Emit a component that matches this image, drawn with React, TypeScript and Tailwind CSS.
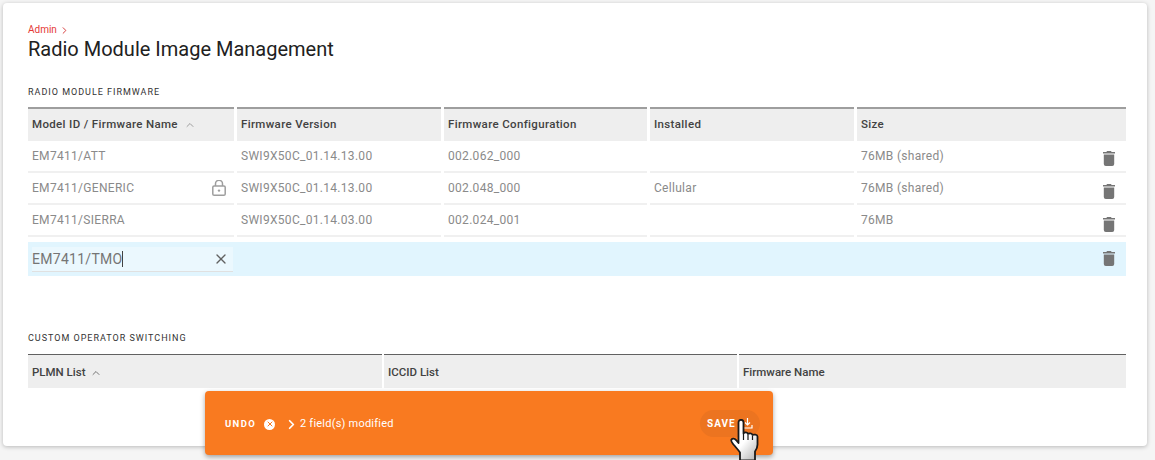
import { ChevronRight, ChevronUp, X } from "lucide-react";

const firmwareColumns = ["Firmware Version", "Firmware Configuration", "Installed", "Size"];

const firmwareRows = [
  { name: "EM7411/ATT", version: "SWI9X50C_01.14.13.00", config: "002.062_000", installed: "", size: "76MB (shared)", trash: "mt-[4px]" },
  { name: "EM7411/GENERIC", version: "SWI9X50C_01.14.13.00", config: "002.048_000", installed: "Cellular", size: "76MB (shared)", locked: true, trash: "mt-[6px]" },
  { name: "EM7411/SIERRA", version: "SWI9X50C_01.14.03.00", config: "002.024_001", installed: "", size: "76MB", trash: "mt-[8px]" },
];

const gridCols = "grid grid-cols-[206px_204px_203px_204px_1fr] gap-x-[3px]";

function TrashIcon({ className = "" }: { className?: string }) {
  return (
    <svg width="12" height="15" viewBox="0 0 12 15" className={`text-[#757575] ${className}`}>
      <path fill="currentColor" d="M4 0h4l.6 1H12v1.600H0V1h3.400zM.8 3.600h10.400V13a2 2 0 0 1-2 2H2.800a2 2 0 0 1-2-2z" />
    </svg>
  );
}

function LockIcon() {
  return (
    <svg width="14" height="16" viewBox="0 0 14 16" fill="none" stroke="#9e9e9e" strokeWidth="1.500">
      <path d="M3.500 6V3.800a3.500 3.500 0 0 1 7 0V6" />
      <rect x="0.800" y="6" width="12.400" height="9.200" rx="1.300" />
      <circle cx="7" cy="10.600" r="1.200" fill="#9e9e9e" stroke="none" />
    </svg>
  );
}

function HandCursor() {
  return (
    <svg width="32" height="42" viewBox="0 0 32 42" className="absolute left-[730px] top-[419px]">
      <defs>
        <linearGradient id="hand" x1="0.2" y1="0.2" x2="0.8" y2="1">
          <stop offset="0.45" stopColor="#ffffff" />
          <stop offset="1" stopColor="#bdbdbd" />
        </linearGradient>
      </defs>
      <path
        fill="url(#hand)"
        stroke="#1a1a1a"
        strokeWidth="1.800"
        strokeLinejoin="round"
        d="M8.500 3.500c0-3.500 5-3.500 5 0v11c1-1.500 4-1.500 4.500.5 1-1 4-1 4.500 1 1-.8 5-.5 5 1.500v8c0 3-1 5-2.500 7v9H10v-8c-2-3-4-5-6.500-8-1.500-2-3-3.500-2-5 1-1.500 3-1 4.500.5l2.500 3z"
      />
      <path stroke="#1a1a1a" strokeWidth="1.200" fill="none" d="M13.500 15v6M18 16v5M22.500 17v4" />
    </svg>
  );
}

export default function App() {
  return (
    <div className="relative h-[460px] w-[1155px] overflow-hidden bg-[#f5f5f5] pl-[3px] pr-2 pt-[3px] font-['Roboto',sans-serif]">
      <div className="h-[443px] rounded bg-white px-[25px] pt-[21px] shadow-[0_1px_4px_rgba(0,0,0,0.25)]">
        <div className="flex items-center gap-[2px] text-[10px] leading-3 text-[#e53935]">
          Admin <ChevronRight size={11} strokeWidth={2} className="text-[#d32f2f]" />
        </div>
        <h1 className="-mt-px text-xl leading-7 text-[#212121]">Radio Module Image Management</h1>

        <h2 className="mt-[23px] text-[9px] font-normal leading-3 tracking-[0.11em] text-[#333333]">RADIO MODULE FIRMWARE</h2>

        <div className="mt-[9px] w-[1098px] text-[12px]">
          <div className={`${gridCols} h-[34px] text-[11.500px] font-medium tracking-[0.03em] text-[#424242]`}>
            <div className="flex items-center gap-[6px] border-t-2 border-[#9e9e9e] bg-[#eeeeee] pl-1">
              Model ID / Firmware Name <ChevronUp size={12} className="text-[#9e9e9e]" />
            </div>
            {firmwareColumns.map((col) => (
              <div key={col} className="flex items-center border-t-2 border-[#9e9e9e] bg-[#eeeeee] pl-1">
                {col}
              </div>
            ))}
          </div>

          {firmwareRows.map((row) => (
            <div key={row.name} className={`${gridCols} h-[32px] tracking-[0.025em] text-[#8a8a8a]`}>
              <div className="flex items-center justify-between border-b-2 border-[#f0f0f0] pl-1 pr-2">
                {row.name}
                {row.locked && <LockIcon />}
              </div>
              <div className="flex items-center border-b-2 border-[#f0f0f0] pl-1">{row.version}</div>
              <div className="flex items-center border-b-2 border-[#f0f0f0] pl-1">{row.config}</div>
              <div className="flex items-center border-b-2 border-[#f0f0f0] pl-1">{row.installed}</div>
              <div className="flex items-center justify-between border-b-2 border-[#f0f0f0] pl-1 pr-[11px]">
                {row.size}
                <TrashIcon className={row.trash} />
              </div>
            </div>
          ))}

          <div className="mt-[5px] flex h-[34px] items-center justify-between bg-[#e1f5fe] pl-1 pr-[11px]">
            <div className="flex h-[25px] w-[201px] items-center justify-between border-b border-[#e0e0e0] bg-[#ebf8fe] pr-1 pt-px text-[14px] tracking-[0.02em] text-[#757575]">
              <span className="flex items-center">
                EM7411/TMO
                <span className="h-4 w-px bg-[#424242]" />
              </span>
              <X size={16} strokeWidth={2} className="text-[#616161]" />
            </div>
            <TrashIcon className="-mt-[2px]" />
          </div>
        </div>

        <h2 className="mt-[56px] text-[9px] font-normal leading-3 tracking-[0.11em] text-[#333333]">CUSTOM OPERATOR SWITCHING</h2>

        <div className="mt-[10px] grid h-[34px] w-[1098px] grid-cols-[354px_353px_1fr] gap-x-[2px] text-[11.500px] font-medium text-[#424242]">
          <div className="flex items-center gap-[4px] border-t border-[#616161] bg-[#eeeeee] pl-1 pt-[2px]">
            PLMN List <ChevronUp size={12} className="text-[#757575]" />
          </div>
          <div className="flex items-center border-t border-[#616161] bg-[#eeeeee] pl-1 pt-[2px]">ICCID List</div>
          <div className="flex items-center border-t border-[#616161] bg-[#eeeeee] pl-1 pt-[2px]">Firmware Name</div>
        </div>
      </div>

      <div className="absolute left-[205px] top-[391px] flex h-16 w-[568px] items-center justify-between rounded bg-[#f97a20] pl-5 pr-[13px] text-white shadow-[0_2px_5px_rgba(0,0,0,0.35)]">
        <div className="flex items-center pt-[2px]">
          <span className="text-[9.500px] font-bold tracking-[0.14em]">UNDO</span>
          <span className="ml-2 flex h-[11px] w-[11px] items-center justify-center rounded-full bg-white">
            <X size={8} strokeWidth={3} className="text-[#f97a20]" />
          </span>
          <ChevronRight size={15} strokeWidth={2.800} className="ml-[9px]" />
          <span className="ml-[1px] text-[11px] tracking-[0.02em]">2 field(s) modified</span>
        </div>
        <div className="flex h-[27px] w-[60px] items-center gap-[6px] rounded-full bg-[#ec7420] pl-[7px] text-[10px] font-bold tracking-[0.1em]">
          SAVE
          <svg width="11" height="11" viewBox="0 0 11 11" fill="none" stroke="white" strokeWidth="1.200">
            <path d="M5.500 0v6.500M3 4.500l2.500 2.500L8 4.500M1 7v3h9V7" />
          </svg>
        </div>
      </div>
      <HandCursor />
    </div>
  );
}
